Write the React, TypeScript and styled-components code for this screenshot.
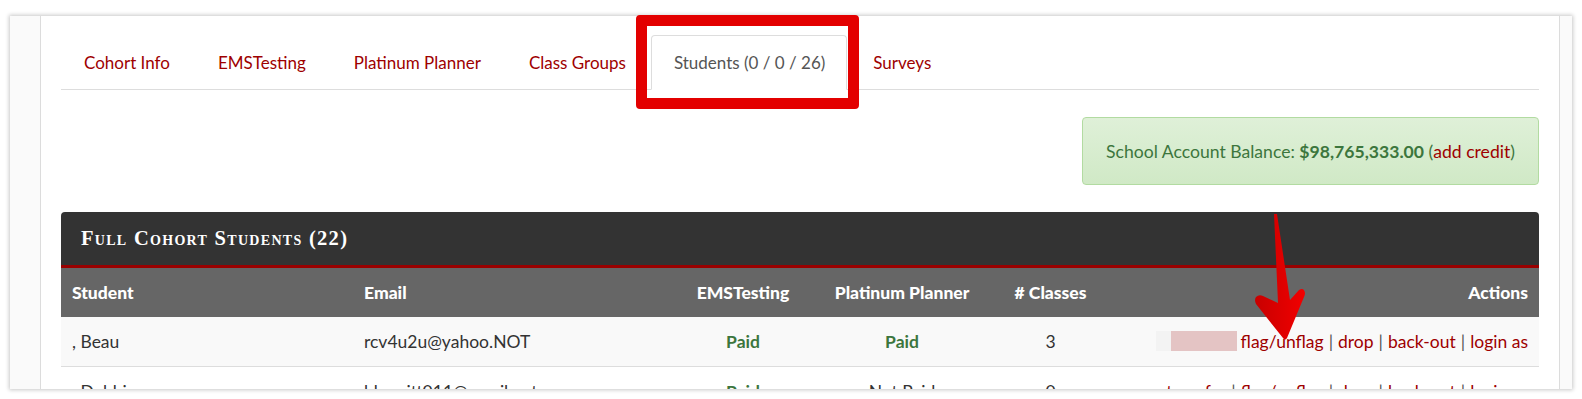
import styled, { createGlobalStyle } from "styled-components";

const GlobalStyle = createGlobalStyle`
  html, body {
    margin: 0;
    padding: 0;
    background: #ffffff;
  }
  body {
    font-family: Lato, "Liberation Sans", sans-serif;
    font-size: 17px;
    color: #333;
  }
`;

const Screen = styled.div`
  position: relative;
  padding: 16px 10px 0 10px;
  height: 399px;
  box-sizing: border-box;
  overflow: hidden;
`;

const Window = styled.div`
  display: flex;
  height: 373px;
  background: #fff;
  overflow: hidden;
  box-shadow: 0 0 4px 1px rgba(0, 0, 0, 0.22);
`;

const Gutter = styled.div<{ $side: "left" | "right" }>`
  flex: none;
  width: ${(p) => (p.$side === "left" ? "30px" : "12px")};
  background: #fafafa;
  ${(p) => (p.$side === "left" ? "border-right" : "border-left")}: 1px solid #dcdcdc;
`;

const Main = styled.div`
  flex: 1;
  padding: 19px 20px 0 20px;
  min-width: 0;
`;

const Tabs = styled.ul`
  display: flex;
  list-style: none;
  margin: 0;
  padding: 0;
  border-bottom: 1px solid #dddddd;
  height: 54px;
`;

const Tab = styled.li<{ $active?: boolean }>`
  display: flex;
  align-items: center;
  padding: 0 21px 0 22px;
  margin-right: 3px;
  margin-bottom: -1px;
  font-size: 17px;
  color: ${(p) => (p.$active ? "#555555" : "#9e0000")};
  background: ${(p) => (p.$active ? "#fff" : "transparent")};
  border: 1px solid ${(p) => (p.$active ? "#dddddd" : "transparent")};
  border-bottom-color: ${(p) => (p.$active ? "#fff" : "transparent")};
  border-radius: 4px 4px 0 0;
  white-space: nowrap;
`;

const BalanceRow = styled.div`
  display: flex;
  justify-content: flex-end;
  margin-top: 27px;
`;

const Balance = styled.div`
  width: 457px;
  height: 68px;
  box-sizing: border-box;
  display: flex;
  align-items: center;
  justify-content: center;
  background: linear-gradient(to bottom, #dff0d8 0%, #d0e9c6 100%);
  border: 1px solid #b2dba1;
  border-radius: 4px;
  color: #3c763d;
  font-size: 17.6px;
  white-space: nowrap;

  b {
    font-weight: 700;
  }
`;

const Link = styled.span`
  color: #9e0000;
`;

const Panel = styled.div`
  margin-top: 27px;
  border-radius: 4px 4px 0 0;
  overflow: hidden;
`;

const PanelHeading = styled.div`
  height: 53px;
  background: #333333;
  border-bottom: 3px solid #990000;
  display: flex;
  align-items: center;
  padding-left: 20px;
  color: #fff;
  font-family: "Liberation Serif", serif;
  font-variant: small-caps;
  font-weight: 700;
  font-size: 20.5px;
  letter-spacing: 1.3px;
`;

const Table = styled.table`
  width: 100%;
  border-collapse: collapse;
  table-layout: fixed;
`;

const Th = styled.th<{ $align?: string }>`
  height: 49px;
  padding: 0 11px;
  background: #666666;
  color: #fff;
  font-weight: 900;
  font-size: 17.5px;
  text-align: ${(p) => p.$align || "left"};
  white-space: nowrap;
`;

const Tr = styled.tr<{ $striped?: boolean }>`
  background: ${(p) => (p.$striped ? "#f9f9f9" : "#fff")};
  border-bottom: 1px solid #dddddd;
`;

const Td = styled.td<{ $align?: string }>`
  height: 49px;
  padding: 0 11px;
  font-size: 17.5px;
  color: #333;
  text-align: ${(p) => p.$align || "left"};
  white-space: nowrap;
`;

const Paid = styled.span`
  color: #3c763d;
  font-weight: 700;
`;

const Sep = styled.span`
  color: #555;
  margin: 0 5px;
`;

const Redacted = styled.span`
  display: inline-block;
  width: 66px;
  height: 20px;
  margin-right: 4px;
  vertical-align: -3px;
  background: #e4c4c4;
  box-shadow: -15px 0 0 0 #f3f3f3;
`;

const Highlight = styled.div`
  position: absolute;
  left: 636px;
  top: 15px;
  width: 223px;
  height: 94px;
  box-sizing: border-box;
  border: 11px solid #e30000;
  border-radius: 4px;
  pointer-events: none;
`;

const Arrow = styled.svg`
  position: absolute;
  left: 1250px;
  top: 210px;
  pointer-events: none;
`;

const actions = ["flag/unflag", "drop", "back-out", "login as"];

function ActionLinks({ withTransfer }: { withTransfer?: boolean }) {
  const list = withTransfer ? ["transfer", ...actions] : actions;
  return (
    <>
      {!withTransfer && <Redacted />}
      {list.map((a, i) => (
        <span key={a}>
          {i > 0 && <Sep>|</Sep>}
          <Link>{a}</Link>
        </span>
      ))}
    </>
  );
}

export default function App() {
  return (
    <>
      <GlobalStyle />
      <Screen>
        <Window>
          <Gutter $side="left" />
          <Main>
            <Tabs>
              <Tab>Cohort Info</Tab>
              <Tab>EMSTesting</Tab>
              <Tab>Platinum Planner</Tab>
              <Tab>Class Groups</Tab>
              <Tab $active>Students (0 / 0 / 26)</Tab>
              <Tab>Surveys</Tab>
            </Tabs>
            <BalanceRow>
              <Balance>
                School Account Balance:&nbsp;<b>$98,765,333.00</b>&nbsp;(
                <Link>add credit</Link>)
              </Balance>
            </BalanceRow>
            <Panel>
              <PanelHeading>Full Cohort Students (22)</PanelHeading>
              <Table>
                <colgroup>
                  <col style={{ width: 292 }} />
                  <col style={{ width: 327 }} />
                  <col style={{ width: 126 }} />
                  <col style={{ width: 192 }} />
                  <col style={{ width: 105 }} />
                  <col />
                </colgroup>
                <thead>
                  <tr>
                    <Th>Student</Th>
                    <Th>Email</Th>
                    <Th $align="center">EMSTesting</Th>
                    <Th $align="center">Platinum Planner</Th>
                    <Th $align="center"># Classes</Th>
                    <Th $align="right">Actions</Th>
                  </tr>
                </thead>
                <tbody>
                  <Tr $striped>
                    <Td>, Beau</Td>
                    <Td>rcv4u2u@yahoo.NOT</Td>
                    <Td $align="center">
                      <Paid>Paid</Paid>
                    </Td>
                    <Td $align="center">
                      <Paid>Paid</Paid>
                    </Td>
                    <Td $align="center">3</Td>
                    <Td $align="right">
                      <ActionLinks />
                    </Td>
                  </Tr>
                  <Tr>
                    <Td>, Debbie</Td>
                    <Td>bhewitt011@gmail.net</Td>
                    <Td $align="center">
                      <Paid>Paid</Paid>
                    </Td>
                    <Td $align="center">Not Paid</Td>
                    <Td $align="center">0</Td>
                    <Td $align="right">
                      <ActionLinks withTransfer />
                    </Td>
                  </Tr>
                </tbody>
              </Table>
            </Panel>
          </Main>
          <Gutter $side="right" />
        </Window>
        <Highlight />
        <Arrow width="60" height="135" viewBox="0 0 60 135">
          <defs>
            <linearGradient id="arrowFill" x1="0" x2="1" y1="0" y2="0">
              <stop offset="0" stopColor="#c80000" />
              <stop offset="1" stopColor="#f20000" />
            </linearGradient>
          </defs>
          <path
            d="M24 4 L27 4 L40 90 L49 80 Q54 77 55 83 Q55 85 54 87 L37 128 Q35 131 33 128 L6 94 Q4 90 6 87 Q9 84 13 86 L28 93 Z"
            fill="url(#arrowFill)"
          />
        </Arrow>
      </Screen>
    </>
  );
}
